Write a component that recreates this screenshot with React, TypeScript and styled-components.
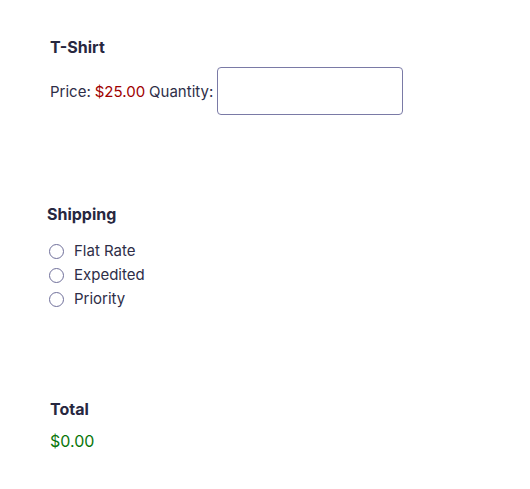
import React from "react";
import styled, { createGlobalStyle } from "styled-components";

const Global = createGlobalStyle`
  body {
    margin: 0;
    background: #ffffff;
    font-family: Inter, "Noto Sans", sans-serif;
    color: #27273f;
  }
`;

const Page = styled.div`
  display: flex;
  flex-direction: column;
  padding: 37px 0 0 50px;
`;

const Section = styled.section<{ $shift?: number; $gap: number }>`
  display: flex;
  flex-direction: column;
  margin-left: ${(p) => p.$shift ?? 0}px;
  margin-bottom: ${(p) => p.$gap}px;
`;

const Title = styled.h3<{ $space: number }>`
  margin: 0 0 ${(p) => p.$space}px 0;
  font-size: 16px;
  font-weight: 700;
  line-height: 20px;
`;

const Line = styled.div`
  display: flex;
  align-items: center;
  font-size: 15px;
  gap: 4px;
  color: #2e2e48;
`;

const Price = styled.span`
  color: #a00000;
`;

const QtyInput = styled.input`
  width: 186px;
  height: 48px;
  box-sizing: border-box;
  border: 1px solid #7a7aa6;
  border-radius: 4px;
  margin: 0;
  font: inherit;
`;

const Options = styled.div`
  display: flex;
  flex-direction: column;
  gap: 6px;
  margin-left: 2px;
`;

const Option = styled.label`
  display: flex;
  align-items: center;
  gap: 10px;
  font-size: 15px;
  line-height: 18px;
  color: #2e2e48;
`;

const Radio = styled.span`
  width: 15px;
  height: 15px;
  box-sizing: border-box;
  border: 1px solid #6f6f9a;
  border-radius: 50%;
  display: inline-block;
`;

const Amount = styled.div`
  color: #0a760a;
  font-size: 16px;
  line-height: 19px;
`;

export default function App() {
  return (
    <>
      <Global />
      <Page>
        <Section $gap={89}>
          <Title $space={10}>T-Shirt</Title>
          <Line>
            <span>Price:</span>
            <Price>$25.00</Price>
            <span>Quantity:</span>
            <QtyInput type="text" />
          </Line>
        </Section>
        <Section $shift={-3} $gap={91}>
          <Title $space={18}>Shipping</Title>
          <Options>
            <Option><Radio />Flat Rate</Option>
            <Option><Radio />Expedited</Option>
            <Option><Radio />Priority</Option>
          </Options>
        </Section>
        <Section $gap={0}>
          <Title $space={13}>Total</Title>
          <Amount>$0.00</Amount>
        </Section>
      </Page>
    </>
  );
}
